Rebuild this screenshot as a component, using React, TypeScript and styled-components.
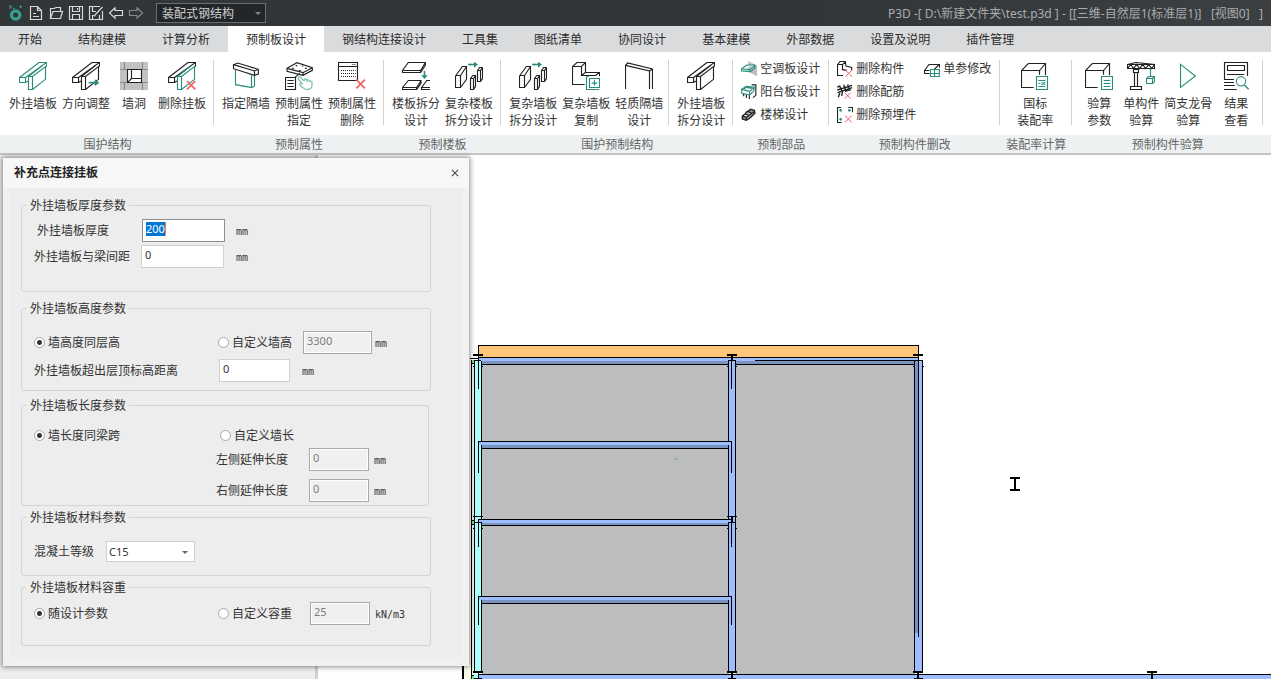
import React from "react";
import styled, { createGlobalStyle, css } from "styled-components";

const TEAL = "#2a8d7c";
const INK = "#222";
const RED = "#f0605f";
const MINT = "#6dbcae";

const GlobalStyle = createGlobalStyle`
  *, *::before, *::after { box-sizing: border-box; }
  body {
    margin: 0;
    font-family: "Noto Sans", "Noto Sans CJK SC", sans-serif;
    font-size: 12px;
    line-height: 17px;
    color: #333;
    overflow: hidden;
  }
  button, input, select { font: inherit; color: inherit; }
  button { border: 0; padding: 0; background: none; cursor: pointer; }
`;

const Page = styled.div`
  display: flex;
  flex-direction: column;
  height: 100vh;
  background: #fff;
`;

/* ---------- title bar ---------- */

const TitleBar = styled.header`
  display: flex;
  align-items: center;
  height: 26px;
  padding: 0 8px;
  background: linear-gradient(90deg, #313639 0%, #313639 65%, #3c4043 100%);
  color: #a9abac;
`;

const QuickBar = styled.div`
  display: flex;
  align-items: center;
  gap: 4px;
`;

const QuickButton = styled.button`
  display: flex;
  width: 16px;
  height: 16px;
`;

const Picker = styled.div<{ $dark?: boolean }>`
  position: relative;
  display: flex;
  &::after {
    content: "";
    position: absolute;
    right: ${(p) => (p.$dark ? 5 : 7)}px;
    top: calc(50% - 1px);
    border: 3px solid transparent;
    border-top-color: ${(p) => (p.$dark ? "#85888a" : "#666")};
    border-bottom: 0;
    pointer-events: none;
  }
`;

const StructureSelect = styled.select`
  appearance: none;
  width: 110px;
  height: 20px;
  margin-left: 12px;
  padding: 0 5px;
  border: 1px solid #6d6d6d;
  border-radius: 0;
  background: #232628;
  color: #cfcfcf;
  outline: none;
`;

const DocumentTitle = styled.span`
  margin-left: auto;
  white-space: pre;
`;

/* ---------- tabs ---------- */

const TabStrip = styled.nav`
  display: flex;
  height: 26px;
  background: #dadbdd;
`;

const Tab = styled.button<{ $active?: boolean }>`
  padding: 0 18px;
  white-space: nowrap;
  color: #2b2b2b;
  background: ${(p) => (p.$active ? "#fff" : "transparent")};
`;

/* ---------- ribbon ---------- */

const Ribbon = styled.section`
  display: flex;
  height: 103px;
  padding-left: 1px;
  background: linear-gradient(#fff 83px, #edf1f2 83px);
  border-bottom: 2px solid #c6c6c6;
`;

const Group = styled.div`
  display: flex;
  flex-direction: column;
`;

const GroupBody = styled.div`
  display: flex;
  height: 83px;
  padding-top: 8px;
`;

const GroupCaption = styled.div`
  height: 18px;
  line-height: 20px;
  text-align: center;
  color: #666;
`;

const toolPadding = { normal: "0 7px 0 8px", tight: "0 5px 0 8px", wide: "0 18px 0 17px" };

const Tools = styled.div<{ $fit: keyof typeof toolPadding }>`
  display: flex;
  align-items: flex-start;
  gap: 5px;
  padding: ${(p) => toolPadding[p.$fit]};
`;

const Divider = styled.i`
  width: 1px;
  height: 65px;
  background: #d2d2d2;
`;

const BigTool = styled.button`
  display: flex;
  flex-direction: column;
  align-items: center;
  min-width: 38px;
  white-space: nowrap;
  svg {
    width: 28px;
    height: 28px;
    margin: 2px 0 5px;
  }
`;

const NarrowTool = styled(BigTool)`
  min-width: 36px;
`;

const SmallTools = styled.div`
  display: grid;
  grid-template-rows: repeat(3, 17px);
  grid-auto-flow: column;
  row-gap: 6px;
  column-gap: 8px;
  padding: 0 8px;
`;

const SmallTool = styled.button`
  display: flex;
  align-items: center;
  gap: 3px;
  white-space: nowrap;
  svg {
    width: 16px;
    height: 16px;
  }
`;

/* ---------- workspace ---------- */

const Workspace = styled.main`
  position: relative;
  display: flex;
  flex: 1;
  min-height: 0;
`;

const SidePanel = styled.aside`
  flex: none;
  width: 318px;
  background: #ededed;
  border-right: 3px solid #cfcfcf;
`;

const Viewport = styled.div`
  flex: 1;
  min-width: 0;
  background: #fff;
  svg {
    display: block;
    width: 100%;
    height: 100%;
  }
`;

/* ---------- dialog ---------- */

const Dialog = styled.section`
  position: absolute;
  left: 3px;
  top: 3px;
  width: 466px;
  background: #f0f0f0;
  box-shadow: 0 0 5px 1px rgba(0, 0, 0, 0.45);
`;

const DialogHeader = styled.header`
  display: flex;
  align-items: center;
  justify-content: space-between;
  height: 30px;
  padding: 0 10px 0 11px;
  background: #f7f7f7;
`;

const DialogTitle = styled.h2`
  margin: 0;
  font-size: 12px;
  line-height: 18px;
  font-weight: 700;
  color: #222;
`;

const CloseButton = styled.button`
  display: flex;
  svg { width: 8px; height: 8px; }
`;

const DialogForm = styled.form`
  margin: 0 7px 8px;
  padding: 9px 31px 12px 11px;
  background: #ededed;
`;

const Section = styled.fieldset<{ $height: number; $gap?: number; $inset?: boolean }>`
  min-width: 0;
  height: ${(p) => p.$height}px;
  margin: ${(p) => p.$gap ?? 0}px ${(p) => (p.$inset ? 2 : 0)}px 0 0;
  padding: 0;
  border: 1px solid #d3d3d3;
  border-radius: 3px;
  legend {
    height: 16px;
    margin-left: 4px;
    padding: 0 3px 0 4px;
    line-height: 18px;
  }
`;

const Row = styled.div<{ $top?: number; $indent?: number }>`
  display: flex;
  align-items: center;
  height: 23px;
  margin-top: ${(p) => p.$top ?? 0}px;
  padding-left: ${(p) => p.$indent ?? 12}px;
`;

const Label = styled.label<{ $width: number }>`
  flex: none;
  width: ${(p) => p.$width}px;
  white-space: nowrap;
`;

const RadioLabel = styled.label<{ $width: number }>`
  display: flex;
  align-items: center;
  flex: none;
  gap: 3px;
  width: ${(p) => p.$width}px;
  white-space: nowrap;
`;

const Radio = styled.input.attrs({ type: "radio" })`
  appearance: none;
  width: 11px;
  height: 11px;
  margin: 0;
  border: 1px solid #a8a8a8;
  border-radius: 50%;
  background: #fff;
  &:checked {
    background: radial-gradient(circle, #333 0 2px, #fff 3px);
  }
`;

const NumberBox = styled.input<{ $width: number; $focused?: boolean }>`
  width: ${(p) => p.$width}px;
  height: 23px;
  padding: 0 3px 4px;
  border: 1px solid #d0d0d0;
  border-radius: 0;
  background: #fff;
  font-size: 11px;
  outline: none;
  &:disabled {
    border-color: #a9a9a9;
    background: #f0f0f0;
    box-shadow: inset 0 0 0 1px #fff;
    color: #7c7c7c;
  }
  ${(p) =>
    p.$focused &&
    css`
      border-color: #8f8f8f;
    `}
`;

const FocusedBox = styled.div`
  display: grid;
  align-items: start;
  > * { grid-area: 1 / 1; }
  input { color: transparent; }
`;

const Selection = styled.span`
  justify-self: start;
  z-index: 1;
  margin: 3px 0 0 4px;
  height: 14px;
  line-height: 14px;
  border-right: 1px solid #f08030;
  background: #0078d7;
  color: #fff;
  font-size: 11px;
  pointer-events: none;
`;

const GradeSelect = styled.select`
  appearance: none;
  width: 89px;
  height: 21px;
  padding: 0 2px;
  border: 1px solid #d0d0d0;
  border-radius: 0;
  background: #fff;
  font-size: 11px;
  outline: none;
`;

const Unit = styled.span<{ $gap: number }>`
  margin: 1px 0 0 ${(p) => p.$gap}px;
  font-family: "DejaVu Sans Mono", monospace;
  font-size: 10px;
`;

/* ---------- icons: large ones on an 84-unit grid, small ones on a 48-unit grid ---------- */

type IconProps = { children: React.ReactNode; grid?: number; origin?: string };

const Icon = ({ children, grid = 84, origin = "0 0" }: IconProps) => (
  <svg viewBox={`${origin} ${grid} ${grid}`} fill="none" stroke={INK} strokeWidth={3.4} aria-hidden="true">
    {children}
  </svg>
);

const HangingPanel = ({ beam = INK, panel = INK, children }: { beam?: string; panel?: string; children?: React.ReactNode }) => (
  <Icon>
    <g stroke={beam}>
      <path d="M1.5 46.5H19.5V61.5H1.5zM1.5 46.5L60 1.5H82.5L19.5 46.5M82.5 1.5V14M19.5 61.5L27 57" />
    </g>
    <g stroke={panel}>
      <path d="M28.5 43.5H40.5V82.5H28.5zM28.5 43.5L70 11M40.5 43.5L79.5 14V52L40.5 82.5" />
    </g>
    {children}
  </Icon>
);

const Cross = ({ x, y, s = 24, w = 5 }: { x: number; y: number; s?: number; w?: number }) => (
  <path d={`M${x} ${y}l${s} ${s}m0 ${-s}l${-s} ${s}`} stroke={RED} strokeWidth={w} />
);

const WallHole = () => (
  <Icon>
    <path d="M0 0H84V84H0z" fill="#c2c2c2" stroke="none" />
    <path d="M0 22.5H22M64 22.5H84M0 61.5H22M64 61.5H84M13.5 0V22M67.5 0V22M13.5 61V84M67.5 61V84" stroke="#8a8a8a" />
    <path d="M22.5 22.5H64.5V61.5H22.5z" fill="#fff" />
    <path d="M34.5 22V49.5H64M34.5 49.5L23 61" />
  </Icon>
);

const PartitionAssign = () => (
  <Icon origin="68 36">
    <path d="M72.5 44L85 39L147 58V72L135.5 76L72.5 56zM72.5 44L135.5 63L147 58M135.5 63V76" />
    <path d="M78.5 60V104L128 113L135.5 108V78M126.5 76V113" stroke={TEAL} />
  </Icon>
);

const AttributeAssign = () => (
  <Icon origin="226 36">
    <path d="M232 55L262 38L308 53V61L280 76L232 64zM232 55L280 68L308 53M280 68V76" />
    <path d="M247 55h5M258 47h5M286 55h5M268 62h5M277 48h4" />
    <path d="M270 70L256 82M227.5 82.5H257.5V118.5H227.5zM233 91.5H252M233 100.5H252M233 109.5H252" />
    <path
      d="M266 82Q263 86 268 90L279 103Q271 98 270 103Q271 108 281 114Q285 119 294 118Q308 118 307 104V96Q304 91 300 94V97M300 94Q297 88 292 90V96M292 90Q288 85 284 88V94M284 88L280 91L272 81Q268 78 266 82"
      stroke={MINT}
    />
  </Icon>
);

const AttributeDelete = () => (
  <Icon origin="384 36">
    <path d="M385.5 37.5H442.5V91.5H385.5zM385 49.5H443" />
    <path d="M393 61.5H437M393 70.5H437M393 79.5H437" strokeDasharray="3 3" />
    <path d="M427 43.5H436" strokeDasharray="3 3" />
    <Cross x={439} y={89} s={26} />
  </Icon>
);

const SlabSplit = () => (
  <Icon origin="575 36">
    <path d="M576.5 61.5L594 37.5H645V46L631 67.5H576.5zM576.5 61.5H631L645 37.5M630.5 60V67" />
    <path d="M576.5 112.5L594 91.5H632V100L619 118.5H576.5zM576.5 112.5H619L632 92M618.5 112V119" />
    <path d="M659 91.5H649L634 112.5H659M633.5 112V118.5H659" />
    <path d="M642.5 63V78" stroke={TEAL} strokeWidth={5} />
    <path d="M633 76H652L642.5 87z" fill={TEAL} stroke="none" />
  </Icon>
);

const ComplexSplit = () => (
  <Icon origin="735 36">
    <path d="M736.5 78L757 49.5H769.5V88L751.5 112.5H736.5zM736.5 76.5H751.5V112.5M751.5 76.5L769.5 49.5" />
    <path d="M781.5 85.5L788 76.5H796.5V109L790.5 118.5H781.5zM781.5 85.5H790.5V119M790.5 85.5L796.5 77" />
    <path d="M802.5 61.5L809 52.5H817.5V86L811.5 94.5H802.5zM802.5 61.5H811.5V94M811.5 61.5L817.5 53" />
    <path d="M774 43.5H794" stroke={TEAL} strokeWidth={5} />
    <path d="M792 35V53L804 43.5z" fill={TEAL} stroke="none" />
  </Icon>
);

const PanelCopy = () => (
  <Icon origin="230 36">
    <path d="M268 103.5H231.5V49.5L245 37.5H270.5V67.5H312.5V79M232 49.5H258.5L270 38M258.5 49.5V76.5H301L312 67.5M258.5 76.5L270 67.5" />
    <path d="M282.5 85.5H312.5V112.5H282.5zM297.5 91V107M289 99.5H306M273.5 79.5V118.5H312M273.5 79.5H280" stroke={TEAL} />
  </Icon>
);

const LightPartition = () => (
  <Icon origin="390 36">
    <path d="M391.5 117V46L398 39L472.5 57V117M391.5 46L463.5 63V117M463.5 63L472.5 57" />
  </Icon>
);

const BoxOutline = () => <path d="M38 76.5H1.5V25.5L22 4.5H73.5V40M2 25.5H55.5L73.5 4.5M55.5 25V38" />;

const AssemblyRate = () => (
  <Icon>
    <BoxOutline />
    <g stroke={TEAL}>
      <path d="M46.5 43.5H79.5V82.5H46.5zM52 55.5H73M52 73.5H73" />
      <path d="M52 64.5H58M72 60L62 69" />
      <path d="M61 61.5h3M69 67.5h4" />
    </g>
  </Icon>
);

const CheckParams = () => (
  <Icon>
    <BoxOutline />
    <path d="M49.5 43.5H82.5V82.5H49.5zM56 55.5H76M56 64.5H76M56 73.5H76" stroke={TEAL} />
  </Icon>
);

const Crane = () => (
  <Icon origin="384 36">
    <path d="M385.5 43.5L411 37.5L466.5 43.5V55.5H385.5zM386 43.5H467M386 55.5L395 43.5L404 55.5L413 43.5L422 55.5L431 43.5L440 55.5L449 43.5L458 55.5L467 43.5" />
    <path d="M403.5 58.5H418.5V67.5H403.5zM406.5 67V109M415.5 67V109M394.5 109.5H427.5V118.5H394.5z" />
    <path d="M454.5 56V78M442.5 85.5L449 79.5H466.5V95L460.5 100.5H442.5zM442.5 85.5H460.5V101M460.5 85.5L466.5 79.5" stroke={TEAL} />
  </Icon>
);

const PlayOutline = () => (
  <Icon origin="532 36">
    <path d="M551.5 43L596 78L551.5 112z" stroke={TEAL} />
  </Icon>
);

const ResultView = () => (
  <Icon origin="670 36">
    <path d="M677.5 88V37.5H746.5V78M686.5 46.5H737.5V61.5H686.5zM685 73.5H737M676 88.5H706M676 97.5H706M676 106.5H708M676 118.5H714" />
    <circle cx="727" cy="94" r="14" stroke={TEAL} />
    <path d="M737 105L750 118" stroke={TEAL} strokeWidth={4} />
  </Icon>
);

const AirSlab = () => (
  <Icon grid={48} origin="18 30">
    <path d="M40 30L66 44V76L40 62z" fill="#bdbdbd" stroke="none" />
    <path d="M19 54L35 42H60V50L46 62L19 60zM19 54L45 56L60 44M45 56V61" stroke={TEAL} fill="#d9eeea" />
  </Icon>
);

const BalconySlab = () => (
  <Icon grid={48} origin="18 98">
    <path d="M20 114L34 105L58 108L56 120L44 131L20 126zM20 114L44 120L58 108M44 120V131M26 112L36 108L50 111" stroke={TEAL} />
    <path d="M50 100.5H62.5V132L54 139M26 128V135M34 130V140M43 132V143" />
  </Icon>
);

const Stair = () => (
  <Icon grid={48} origin="18 168">
    <path
      d="M22 195L30 189L34 183L42 179L46 175L58 178L60 186L52 194L44 202L34 208L22 204zM22 195L34 199L60 180M32 189L42 193M40 182L51 187M34 199V207"
      fill="#9a9a9a"
      strokeWidth={4}
    />
  </Icon>
);

const DeleteMember = () => (
  <Icon grid={48} origin="310 30">
    <path d="M328 73.5H311.5V41L319 31.5H335L337 45L354 49V58M311.5 40.5H327L335 33M326.5 41V56L339 58" />
    <Cross x={335} y={57} s={20} w={3} />
  </Icon>
);

const DeleteRebar = () => (
  <Icon grid={48} origin="310 98">
    <path d="M311 116L355 102M312 124L355 109M318 104L326 120M330 100L336 117M342 99L346 113M320 120L314 138M327 118L324 134M311 107L320 104M334 120L352 115" strokeWidth={4} />
    <Cross x={333} y={124} s={18} w={3} />
  </Icon>
);

const DeleteEmbed = () => (
  <Icon grid={48} origin="310 168">
    <path d="M322 169.5H311.5V214.5H324M344 169.5H356.5V184" />
    <g fill={TEAL} stroke="none">
      <circle cx="321" cy="178" r="4" />
      <circle cx="347" cy="178" r="4" />
      <circle cx="321" cy="205" r="4" />
    </g>
    <Cross x={334} y={194} s={20} w={3} />
  </Icon>
);

const EditParam = () => (
  <Icon grid={48} origin="567 30">
    <path d="M584 67.5H568.5V58.5L582 40.5H613.5V50M569 58.5H583M597 56L611 42" />
    <path d="M586.5 55.5H613V76.5H586.5zM586 67.5H613M598.5 56V76" stroke={TEAL} />
  </Icon>
);

const TitleIcon = ({ children, dim }: { children: React.ReactNode; dim?: boolean }) => (
  <svg viewBox="0 0 16 16" width="16" height="16" fill="none" stroke={dim ? "#858888" : "#d8d8d8"} strokeWidth="1.2" aria-hidden="true">
    {children}
  </svg>
);

const quickActions = [
  {
    name: "应用菜单",
    icon: (
      <svg viewBox="0 0 48 48" width="16" height="16" fill="none" stroke="#36a08f" aria-hidden="true">
        <circle cx="23" cy="30" r="12.5" strokeWidth="10" />
        <path d="M3 3H11L5 9H11M34 5H42M38 1V9" strokeWidth="3" />
        <path d="M15 10H20" strokeWidth="4" />
      </svg>
    ),
  },
  { name: "新建", icon: <TitleIcon><path d="M2.5 1.5H9.5L13.5 5.5V14.5H2.5zM9.5 1.5V5.5H13.5M5 8.5H8M5 11.5H11" /></TitleIcon> },
  { name: "打开", icon: <TitleIcon><path d="M2.5 13.5L5 6.5H14.5L12.5 13.5H2.5zM2.5 13.5V3.5H6L8 2.5H12.5V6.5" /></TitleIcon> },
  { name: "保存", icon: <TitleIcon><path d="M1.5 1.5H14.5V14.5H1.5zM4.5 1.5V6.5H11.5V1.5M4.5 14.5V9.5H11.5V14.5M9.5 3V5" /></TitleIcon> },
  { name: "另存为", icon: <TitleIcon><path d="M12 1.5H1.5V14.5H14.5V6M4.5 1.5V6.5H8M4.5 14.5V10.5H6M11.5 14.5V10M7 10L14.5 2M7 10L6.5 11.5" /></TitleIcon> },
  { name: "撤销", icon: <TitleIcon><path d="M1.5 8L7 2.8V5.5H14.5V10.5H7V13.2z" /></TitleIcon> },
  { name: "重做", icon: <TitleIcon dim><path d="M14.5 8L9 2.8V5.5H1.5V10.5H9V13.2z" /></TitleIcon> },
];

/* ---------- content ---------- */

const tabs = [
  "开始", "结构建模", "计算分析", "预制板设计", "钢结构连接设计", "工具集",
  "图纸清单", "协同设计", "基本建模", "外部数据", "设置及说明", "插件管理",
];

type Tool = { icon: React.ReactNode; lines: string[]; narrow?: boolean };

const ToolButtons = ({ items, fit = "normal" }: { items: Tool[]; fit?: keyof typeof toolPadding }) => (
  <>
    <Tools $fit={fit}>
      {items.map((t) => {
        const Button = t.narrow ? NarrowTool : BigTool;
        return (
          <Button key={t.lines.join("")} type="button">
            {t.icon}
            {t.lines.map((l) => (
              <span key={l}>{l}</span>
            ))}
          </Button>
        );
      })}
    </Tools>
    <Divider />
  </>
);

const SmallButtons = ({ items }: { items: [React.ReactNode, string][] }) => (
  <>
    <SmallTools>
      {items.map(([icon, text]) => (
        <SmallTool key={text} type="button">
          {icon}
          {text}
        </SmallTool>
      ))}
    </SmallTools>
    <Divider />
  </>
);

const groups: { caption: string; body: React.ReactNode }[] = [
  {
    caption: "围护结构",
    body: (
      <ToolButtons
        items={[
          { icon: <HangingPanel beam={TEAL} panel={TEAL} />, lines: ["外挂墙板"] },
          {
            icon: (
              <HangingPanel>
                <path d="M50 62H70" stroke={TEAL} strokeWidth={5} />
                <path d="M68 52V73L82 62z" fill={TEAL} stroke="none" />
              </HangingPanel>
            ),
            lines: ["方向调整"],
          },
          { icon: <WallHole />, lines: ["墙洞"] },
          { icon: <HangingPanel panel={TEAL}><Cross x={57} y={57} s={25} /></HangingPanel>, lines: ["删除挂板"] },
        ]}
      />
    ),
  },
  {
    caption: "预制属性",
    body: (
      <ToolButtons
        items={[
          { icon: <PartitionAssign />, lines: ["指定隔墙"] },
          { icon: <AttributeAssign />, lines: ["预制属性", "指定"] },
          { icon: <AttributeDelete />, lines: ["预制属性", "删除"] },
        ]}
      />
    ),
  },
  {
    caption: "预制楼板",
    body: (
      <ToolButtons
        items={[
          { icon: <SlabSplit />, lines: ["楼板拆分", "设计"] },
          { icon: <ComplexSplit />, lines: ["复杂楼板", "拆分设计"] },
        ]}
      />
    ),
  },
  {
    caption: "围护预制结构",
    body: (
      <>
        <ToolButtons
          fit="tight"
          items={[
            { icon: <ComplexSplit />, lines: ["复杂墙板", "拆分设计"] },
            { icon: <PanelCopy />, lines: ["复杂墙板", "复制"] },
            { icon: <LightPartition />, lines: ["轻质隔墙", "设计"] },
          ]}
        />
        <ToolButtons items={[{ icon: <HangingPanel />, lines: ["外挂墙板", "拆分设计"] }]} />
      </>
    ),
  },
  {
    caption: "预制部品",
    body: (
      <SmallButtons
        items={[
          [<AirSlab />, "空调板设计"],
          [<BalconySlab />, "阳台板设计"],
          [<Stair />, "楼梯设计"],
        ]}
      />
    ),
  },
  {
    caption: "预制构件删改",
    body: (
      <SmallButtons
        items={[
          [<DeleteMember />, "删除构件"],
          [<DeleteRebar />, "删除配筋"],
          [<DeleteEmbed />, "删除预埋件"],
          [<EditParam />, "单参修改"],
        ]}
      />
    ),
  },
  {
    caption: "装配率计算",
    body: <ToolButtons fit="wide" items={[{ icon: <AssemblyRate />, lines: ["国标", "装配率"], narrow: true }]} />,
  },
  {
    caption: "预制构件验算",
    body: (
      <ToolButtons
        items={[
          { icon: <CheckParams />, lines: ["验算", "参数"] },
          { icon: <Crane />, lines: ["单构件", "验算"], narrow: true },
          { icon: <PlayOutline />, lines: ["简支龙骨", "验算"] },
          { icon: <ResultView />, lines: ["结果", "查看"] },
        ]}
      />
    ),
  },
];

/* ---------- floor plan ---------- */

const BLUE = "#9dbdff";
const SHADE = "#7b93bf";
const SLAB = "#bcbdbf";

const Beam = ({ y, h, right = 731, drop }: { y: number; h: number; right?: number; drop: number }) => (
  <g>
    <path d={`M478 ${y}H${right}V${y + 4}H478z`} fill={BLUE} />
    <path d={`M482 ${y + 4}H${Math.min(right - 3, 914)}V${y + h}H482z`} fill={SHADE} />
    <path d={`M478.5 ${y + drop}V${y + 0.5}H${right + 0.5}M482 ${y + h + 0.5}H${Math.min(right - 3, 914)}`} stroke="#000" />
    <path d={`M731.5 ${y}V${y + drop}`} stroke="#000" />
  </g>
);

const Joint = ({ x, y, w = 2, stem = 5 }: { x: number; y: number; w?: number; stem?: number }) => (
  <g stroke="#000">
    <path d={`M${x - 5} ${y}H${x + 5}`} strokeWidth={w} />
    <path d={`M${x} ${y}V${y + stem}`} strokeWidth={2} />
  </g>
);

const FloorPlan = () => (
  <svg aria-label="平面图" shapeRendering="crispEdges" fill="none">
    <g transform="translate(-318 -155)">
      <path d="M464 600H471V700H464z" fill="#fcffec" />
      <path d="M463 600V700" stroke="#000" strokeWidth="2" />
      <path d="M472 360H475V700H472z" fill="#ececec" />
      <path d="M471 360H474V363H471zM471 521H474V524H471zM471 676H474V680H471z" fill="#6fe06f" />
      <path d="M470 358.5H478M471.5 360V700M471 363.5H474M471 520.5H474M471 524.5H474M471 675.5H474" stroke="#000" />
      <path d="M482 365H729V674H482zM736 365H915V674H736z" fill={SLAB} />

      <path d="M474.5 360.5H481.5V672.5H474.5z" fill="#aaffff" stroke="#000" />
      <path d="M728.5 360.5H735.5V672.5H728.5z" fill={BLUE} stroke="#000" />
      <path d="M914.5 360.5H922.5V672.5H914.5z" fill={BLUE} stroke="#000" />

      <path d="M478.5 345.5H918.5V357.5H478.5z" fill="#ffc67a" stroke="#000" />
      <path d="M479 358H918V361H479z" fill={BLUE} />
      <path d="M482 361H728V364H482zM736 361H914V364H736zM915 361H918V633H915z" fill={SHADE} />
      <path d="M482 364.5H728M736 364.5H914M755 360.5H922M728 360.5H736M474 360.5H481M478.5 357V389M731.5 357V389M918.5 345V637" stroke="#000" />
      <path d="M473 366.5H475M481 366.5H483M727 366.5H729M735 366.5H737M913 366.5H915M922 366.5H924" stroke="#000" />

      <Beam y={441} h={7} drop={32} />
      <Beam y={519} h={6} drop={28} />
      <Beam y={596} h={7} drop={29} />
      <path d="M474 522.5H482M728 522.5H736M473 528.5H475M481 528.5H483M727 528.5H729M735 528.5H737" stroke="#000" />
      <path d="M674 458H678V460H674z" fill="#9ab99c" />

      <path d="M478 675H2400V700H478z" fill={BLUE} />
      <path d="M478 674.5H2400" stroke="#000" />
      <path d="M474 674H478V700H474z" fill="#aaffff" />
      <path d="M478.5 672V678M474 678.5H482M728 678.5H736M914 678.5H923" stroke="#000" />

      <Joint x={478} y={355} stem={0} />
      <Joint x={732} y={355} />
      <Joint x={918} y={355} stem={0} />
      <Joint x={478} y={516.5} w={1} stem={0} />
      <Joint x={732} y={516.5} w={1} />
      <Joint x={478} y={672} stem={0} />
      <Joint x={732} y={672} stem={8} />
      <Joint x={918} y={672} stem={8} />
      <Joint x={1152} y={672} stem={8} />

      <path d="M1010 478H1020M1010 490H1020M1015 478V490" stroke="#000" strokeWidth="2" />
    </g>
  </svg>
);

/* ---------- page ---------- */

const PanelDialog = () => (
  <Dialog role="dialog" aria-labelledby="dialog-title">
    <DialogHeader>
      <DialogTitle id="dialog-title">补充点连接挂板</DialogTitle>
      <CloseButton type="button" aria-label="关闭">
        <svg viewBox="0 0 9 9" stroke="#555" strokeWidth="1.4" aria-hidden="true">
          <path d="M1 1L8 8M8 1L1 8" />
        </svg>
      </CloseButton>
    </DialogHeader>
    <DialogForm>
      <Section $height={95}>
        <legend>外挂墙板厚度参数</legend>
        <Row $top={6} $indent={15}>
          <Label $width={105} htmlFor="thickness">外挂墙板厚度</Label>
          <FocusedBox>
            <NumberBox id="thickness" $width={83} $focused defaultValue="200" />
            <Selection aria-hidden="true">200</Selection>
          </FocusedBox>
          <Unit $gap={11}>mm</Unit>
        </Row>
        <Row $top={3}>
          <Label $width={107} htmlFor="beam-gap">外挂墙板与梁间距</Label>
          <NumberBox id="beam-gap" $width={83} defaultValue="0" />
          <Unit $gap={12}>mm</Unit>
        </Row>
      </Section>

      <Section $height={91} $gap={8}>
        <legend>外挂墙板高度参数</legend>
        <Row $top={15}>
          <RadioLabel $width={184}>
            <Radio name="height" defaultChecked />
            墙高度同层高
          </RadioLabel>
          <RadioLabel $width={85}>
            <Radio name="height" />
            自定义墙高
          </RadioLabel>
          <NumberBox $width={69} defaultValue="3300" disabled aria-label="自定义墙高" />
          <Unit $gap={3}>mm</Unit>
        </Row>
        <Row $top={5}>
          <Label $width={185} htmlFor="overrun">外挂墙板超出层顶标高距离</Label>
          <NumberBox id="overrun" $width={71} defaultValue="0" />
          <Unit $gap={12}>mm</Unit>
        </Row>
      </Section>

      <Section $height={109} $gap={6} $inset>
        <legend>外挂墙板长度参数</legend>
        <Row $top={11}>
          <RadioLabel $width={186}>
            <Radio name="length" defaultChecked />
            墙长度同梁跨
          </RadioLabel>
          <RadioLabel $width={85}>
            <Radio name="length" />
            自定义墙长
          </RadioLabel>
        </Row>
        <Row $top={1} $indent={194}>
          <Label $width={93} htmlFor="left-extend">左侧延伸长度</Label>
          <NumberBox id="left-extend" $width={60} defaultValue="0" disabled />
          <Unit $gap={5}>mm</Unit>
        </Row>
        <Row $top={8} $indent={194}>
          <Label $width={93} htmlFor="right-extend">右侧延伸长度</Label>
          <NumberBox id="right-extend" $width={60} defaultValue="0" disabled />
          <Unit $gap={5}>mm</Unit>
        </Row>
      </Section>

      <Section $height={67} $gap={3}>
        <legend>外挂墙板材料参数</legend>
        <Row $top={15}>
          <Label $width={72} htmlFor="grade">混凝土等级</Label>
          <Picker>
            <GradeSelect id="grade" defaultValue="C15">
              <option>C15</option>
            </GradeSelect>
          </Picker>
        </Row>
      </Section>

      <Section $height={67} $gap={3}>
        <legend>外挂墙板材料容重</legend>
        <Row $top={7}>
          <RadioLabel $width={184}>
            <Radio name="weight" defaultChecked />
            随设计参数
          </RadioLabel>
          <RadioLabel $width={92}>
            <Radio name="weight" />
            自定义容重
          </RadioLabel>
          <NumberBox $width={60} defaultValue="25" disabled aria-label="自定义容重" />
          <Unit $gap={5}>kN/m3</Unit>
        </Row>
      </Section>
    </DialogForm>
  </Dialog>
);

export default function App() {
  return (
    <Page>
      <GlobalStyle />
      <TitleBar>
        <QuickBar>
          {quickActions.map((a) => (
            <QuickButton key={a.name} type="button" aria-label={a.name}>
              {a.icon}
            </QuickButton>
          ))}
        </QuickBar>
        <Picker $dark>
          <StructureSelect aria-label="结构类型" defaultValue="装配式钢结构">
            <option>装配式钢结构</option>
          </StructureSelect>
        </Picker>
        <DocumentTitle>{"P3D -[ D:\\新建文件夹\\test.p3d ] - [[三维-自然层1(标准层1)]   [视图0]   ]"}</DocumentTitle>
      </TitleBar>
      <TabStrip>
        {tabs.map((t) => (
          <Tab key={t} type="button" $active={t === "预制板设计"}>
            {t}
          </Tab>
        ))}
      </TabStrip>
      <Ribbon>
        {groups.map((g) => (
          <Group key={g.caption}>
            <GroupBody>{g.body}</GroupBody>
            <GroupCaption>{g.caption}</GroupCaption>
          </Group>
        ))}
      </Ribbon>
      <Workspace>
        <SidePanel />
        <Viewport>
          <FloorPlan />
        </Viewport>
        <PanelDialog />
      </Workspace>
    </Page>
  );
}
